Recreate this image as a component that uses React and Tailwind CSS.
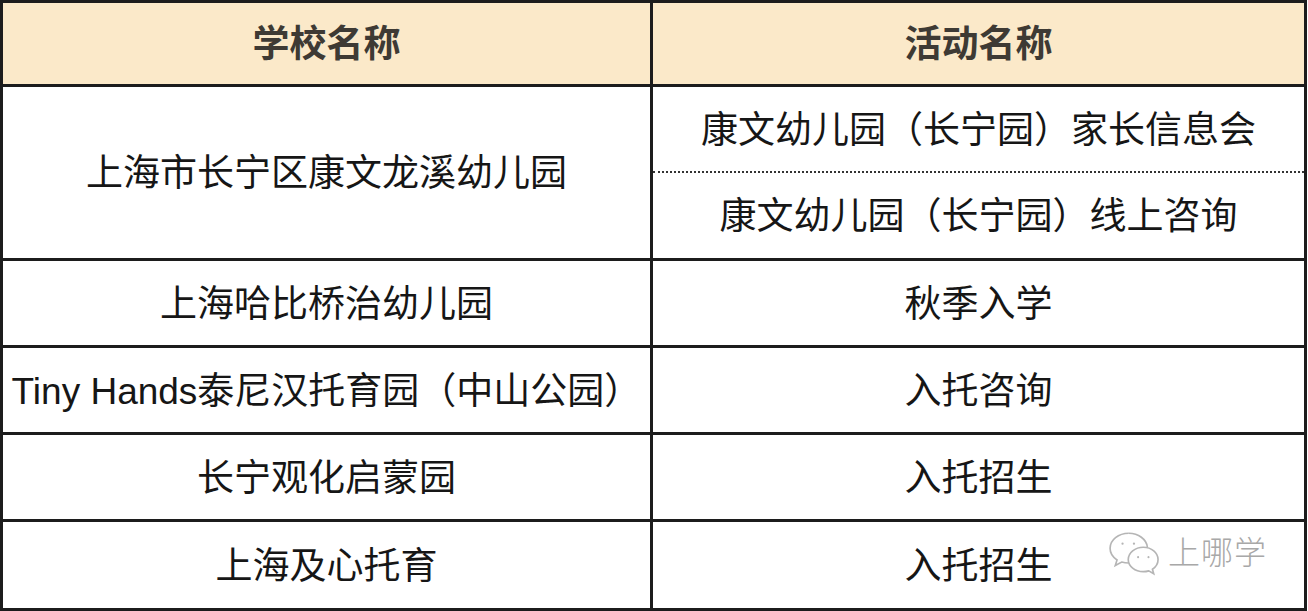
import React from "react";

const rows = [
  { school: "上海哈比桥治幼儿园", activity: "秋季入学" },
  { school: "Tiny Hands泰尼汉托育园（中山公园）", activity: "入托咨询" },
  { school: "长宁观化启蒙园", activity: "入托招生" },
];

const font = { fontFamily: '"Liberation Sans", "Noto Sans CJK SC", sans-serif' };

const WechatMark = () => (
  <svg width="54" height="46" viewBox="0 0 52 44" fill="none" stroke="#b5b5b5" strokeWidth="1.6">
    {/* big bubble */}
    <path d="M20 3C10 3 2 9.5 2 17.5c0 4.6 2.6 8.6 6.7 11.2L7 34l6.2-3.3c2.1.6 4.4.9 6.8.9" />
    <path d="M20 3c9.4 0 17 5.8 17.9 13.2" />
    <circle cx="14" cy="13" r="1.1" fill="#b5b5b5" stroke="none" />
    <circle cx="25" cy="13" r="1.1" fill="#b5b5b5" stroke="none" />
    {/* small bubble */}
    <path d="M34 16.5c-8 0-14.5 5.3-14.5 11.8S26 40 34 40c1.8 0 3.6-.3 5.2-.8L44 42l-1.2-4.3c3.3-2.2 5.4-5.6 5.4-9.4 0-6.5-6.3-11.8-14.2-11.8z" />
    <circle cx="29" cy="26" r="1" fill="#b5b5b5" stroke="none" />
    <circle cx="39" cy="26" r="1" fill="#b5b5b5" stroke="none" />
  </svg>
);

const App = () => {
  return (
    <div className="relative w-[1308px] h-[611px] bg-white" style={font}>
      <div className="w-[1307px] h-[611px] border-[3px] border-[#1c1c1c] flex flex-col text-[37px] text-[#161616]">
        {/* header */}
        <div className="flex h-[84px] border-b-[3px] border-[#1c1c1c] bg-[#fbe9c9] font-bold text-[#3e3a34]">
          <div className="w-[650px] border-r-[3px] border-[#1c1c1c] flex items-center justify-center pt-[3px]">学校名称</div>
          <div className="flex-1 flex items-center justify-center pt-[3px]">活动名称</div>
        </div>

        {/* row with two activities */}
        <div className="flex h-[174px] border-b-[3px] border-[#1c1c1c]">
          <div className="w-[650px] border-r-[3px] border-[#1c1c1c] flex items-center justify-center pt-[3px]">上海市长宁区康文龙溪幼儿园</div>
          <div className="flex-1 flex flex-col">
            <div className="h-[86px] border-b-2 border-dotted border-[#333] flex items-center justify-center pt-[3px]">康文幼儿园（长宁园）家长信息会</div>
            <div className="flex-1 flex items-center justify-center pt-[3px]">康文幼儿园（长宁园）线上咨询</div>
          </div>
        </div>

        {rows.map((r, i) => (
          <div key={i} className="flex h-[87px] border-b-[3px] border-[#1c1c1c]">
            <div className="w-[650px] border-r-[3px] border-[#1c1c1c] flex items-center justify-center whitespace-nowrap pt-[4px]">{r.school}</div>
            <div className="flex-1 flex items-center justify-center pt-[4px]">{r.activity}</div>
          </div>
        ))}

        <div className="flex flex-1">
          <div className="w-[650px] border-r-[3px] border-[#1c1c1c] flex items-center justify-center pt-[4px]">上海及心托育</div>
          <div className="flex-1 flex items-center justify-center pt-[4px]">入托招生</div>
        </div>
      </div>

      {/* watermark */}
      <div className="absolute left-[1108px] top-[529px] flex items-center gap-[6px] text-[#a8a8a8]">
        <WechatMark />
        <span className="text-[32px] font-light tracking-[1px]">上哪学</span>
      </div>
    </div>
  );
};

export default App;
